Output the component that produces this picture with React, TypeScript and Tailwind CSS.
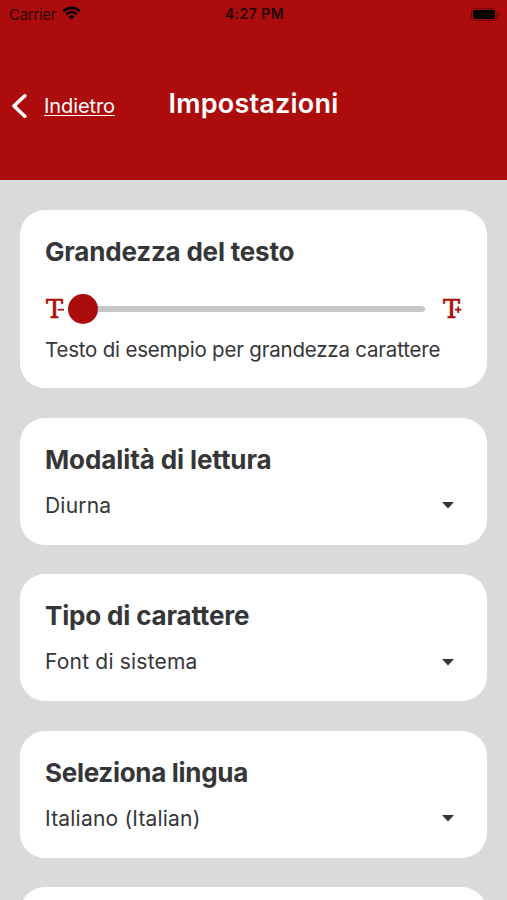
import type { ReactNode } from "react";

const selects = [
  { title: "Modalità di lettura", value: "Diurna", titleSpacing: "tracking-[-0.1px]" },
  { title: "Tipo di carattere", value: "Font di sistema", titleSpacing: "tracking-[-0.17px]" },
  { title: "Seleziona lingua", value: "Italiano (Italian)", titleSpacing: "tracking-[-0.3px]" },
];

const StatusBar = () => (
  <div className="flex h-7 items-center justify-between pl-[9px] pr-[7px] text-black">
    <div className="flex w-24 items-center gap-1.5">
      <span className="text-[15px] leading-none tracking-[-0.3px] text-black/80">Carrier</span>
      <svg width="19" height="14" viewBox="0 0 19 14" fill="none" stroke="currentColor" className="-mt-0.5">
        <path d="M1.3 5.2a11.6 11.6 0 0 1 16.4 0" strokeWidth="2.7" />
        <path d="M4.3 8.3a7.4 7.4 0 0 1 10.4 0" strokeWidth="2.4" />
        <path d="M9.5 13.6 6.6 10.7a4.1 4.1 0 0 1 5.8 0z" fill="currentColor" stroke="none" />
      </svg>
    </div>
    <span className="text-[14px] font-semibold leading-none tracking-[0.45px] text-black/85">4:27 PM</span>
    <div className="flex w-24 items-center justify-end gap-px">
      <div className="h-[13px] w-[26px] rounded-[4px] border border-black/35 p-px">
        <div className="h-full rounded-[2px] bg-black" />
      </div>
      <div className="h-1 w-[2px] rounded-r-full bg-black/35" />
    </div>
  </div>
);

const Card = ({ children }: { children: ReactNode }) => (
  <section className="rounded-[25px] bg-white px-[25px] pt-[25px]">{children}</section>
);

const SizeIcon = ({ plus }: { plus?: boolean }) => (
  <svg width="20" height="34" viewBox="0 0 20 34" className="shrink-0 text-[#ad0c0c]">
    <text
      x="1"
      y="26"
      textLength="17"
      lengthAdjust="spacingAndGlyphs"
      fill="currentColor"
      stroke="currentColor"
      strokeWidth="0.7"
      className="font-['DejaVu_Serif',serif] text-[26px]"
    >
      T
    </text>
    <path d="M12.2 17.7h7.8" stroke="#fff" strokeWidth="5" />
    <path d={plus ? "M13 17.7h6.4M16.2 14.5v6.4" : "M12.6 17.7h6.4"} stroke="currentColor" strokeWidth="1.7" />
  </svg>
);

const App = () => {
  return (
    <div className="h-[900px] w-full overflow-hidden bg-[#dadada] font-[Inter,'Liberation_Sans',sans-serif] text-[#353638]">
      {/* Header */}
      <header className="h-[180px] bg-[#ad0c0c] text-white">
        <StatusBar />
        <div className="grid grid-cols-[1fr_auto_1fr] items-center pt-[58px]">
          <a className="flex items-center pl-[11px] pt-1">
            <svg width="16" height="26" viewBox="0 0 16 26" fill="none" stroke="currentColor" strokeWidth="3.6" strokeLinecap="round" strokeLinejoin="round">
              <path d="M13.8 2.8 3 13l10.8 10.2" />
            </svg>
            <span className="ml-[17px] text-[20px] leading-6 tracking-[-0.1px] underline decoration-1 underline-offset-2">Indietro</span>
          </a>
          <h1 className="text-[27px] font-semibold leading-9 tracking-[0.2px]">Impostazioni</h1>
        </div>
      </header>

      <main className="flex flex-col gap-[29.5px] px-5 pt-[30px]">
        {/* Text size */}
        <Card>
          <div className="h-[153px]">
            <h2 className="text-[26px] font-bold leading-[34px] tracking-[-0.2px]">Grandezza del testo</h2>
            <div className="mt-[25px] flex h-[30px] items-center">
              <SizeIcon />
              <div className="ml-[3px] size-[30px] rounded-full bg-[#ad0c0c]" />
              <div className="h-1.5 flex-1 rounded-r-full bg-[#c7c7c7]" />
              <div className="ml-[17px]">
                <SizeIcon plus />
              </div>
            </div>
            <p className="mt-3 whitespace-nowrap text-[20.5px] leading-7 tracking-[-0.2px]">Testo di esempio per grandezza carattere</p>
          </div>
        </Card>

        {/* Dropdowns */}
        {selects.map((item) => (
          <Card key={item.title}>
            <div className="h-[102px]">
              <h2 className={`text-[26px] font-bold leading-[34px] ${item.titleSpacing}`}>{item.title}</h2>
              <div className="mt-[15px] flex items-center justify-between pr-2">
                <span className="text-[21px] leading-7 tracking-[0.2px]">{item.value}</span>
                <svg width="12" height="7" viewBox="0 0 12 7" fill="currentColor">
                  <path d="M0 0h12L6 6.5z" />
                </svg>
              </div>
            </div>
          </Card>
        ))}

        <Card>
          <div className="h-[102px]" />
        </Card>
      </main>
    </div>
  );
};

export default App;
